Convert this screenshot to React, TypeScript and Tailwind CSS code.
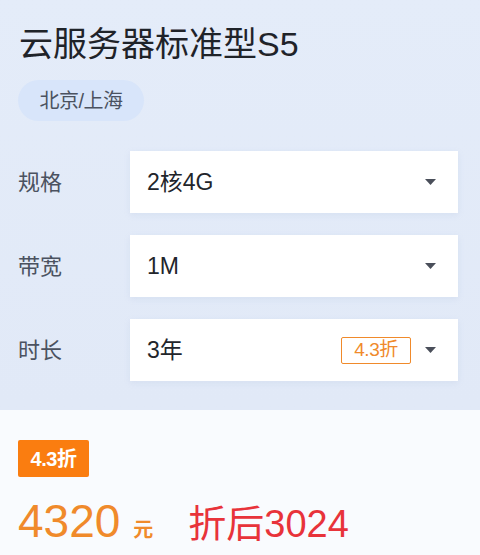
const font = "font-['Liberation_Sans','Noto_Sans_CJK_SC',sans-serif]";

function Caret() {
  return (
    <svg width="11" height="6" viewBox="0 0 11 6" className="shrink-0">
      <path d="M0 0h11L5.5 6z" fill="#4a4f5a" />
    </svg>
  );
}

function SelectRow({ label, value, tag }: { label: string; value: string; tag?: string }) {
  return (
    <div className="flex items-center">
      <div className="w-[112px] text-[22px] text-[#4b5260]">{label}</div>
      <div className="flex h-[62px] w-[328px] items-center bg-white pl-[17px] pr-[22px] shadow-[0_2px_6px_rgba(150,170,210,0.15)]">
        <span className="flex-1 text-[23px] text-[#22252b]">{value}</span>
        {tag && (
          <span className="mr-[14px] flex h-[27px] w-[70px] items-center justify-center rounded-[2px] border border-[#f08a2b] text-[19px] tracking-[-0.5px] text-[#f08a2b]">
            {tag}
          </span>
        )}
        <Caret />
      </div>
    </div>
  );
}

export default function App() {
  return (
    <div className={`${font} h-[555px] w-[480px] overflow-hidden bg-[#f9fbfe]`}>
      {/* top config panel */}
      <div className="bg-gradient-to-b from-[#e4ecf9] to-[#e1e9f7] px-[18px] pb-[29px] pt-[24px]">
        <h1 className="pl-[1px] text-[34px] leading-[40px] text-[#1f2329]">云服务器标准型S5</h1>
        <div className="mt-4 flex h-[41px] w-[126px] items-center justify-center rounded-full bg-[#d8e5fa] text-[20px] tracking-[-0.5px] text-[#4b5260]">
          北京/上海
        </div>
        <div className="mt-[30px] flex flex-col gap-[22px]">
          <SelectRow label="规格" value="2核4G" />
          <SelectRow label="带宽" value="1M" />
          <SelectRow label="时长" value="3年" tag="4.3折" />
        </div>
      </div>

      {/* price area */}
      <div className="px-[18px] pt-[30px]">
        <div className="flex h-[37px] w-[71px] items-center justify-center rounded-[2px] bg-[#fa7d10] text-[20px] font-bold tracking-[-0.5px] text-white">
          4.3折
        </div>
        <div className="mt-[18px] flex items-baseline">
          <span className="text-[46px] leading-[52px] text-[#f08a2b]">4320</span>
          <span className="ml-[13px] text-[20px] font-bold text-[#f08a2b]">元</span>
          <span className="ml-[35px] text-[38px] leading-[52px] text-[#e8333a]">折后3024</span>
        </div>
      </div>
    </div>
  );
}
